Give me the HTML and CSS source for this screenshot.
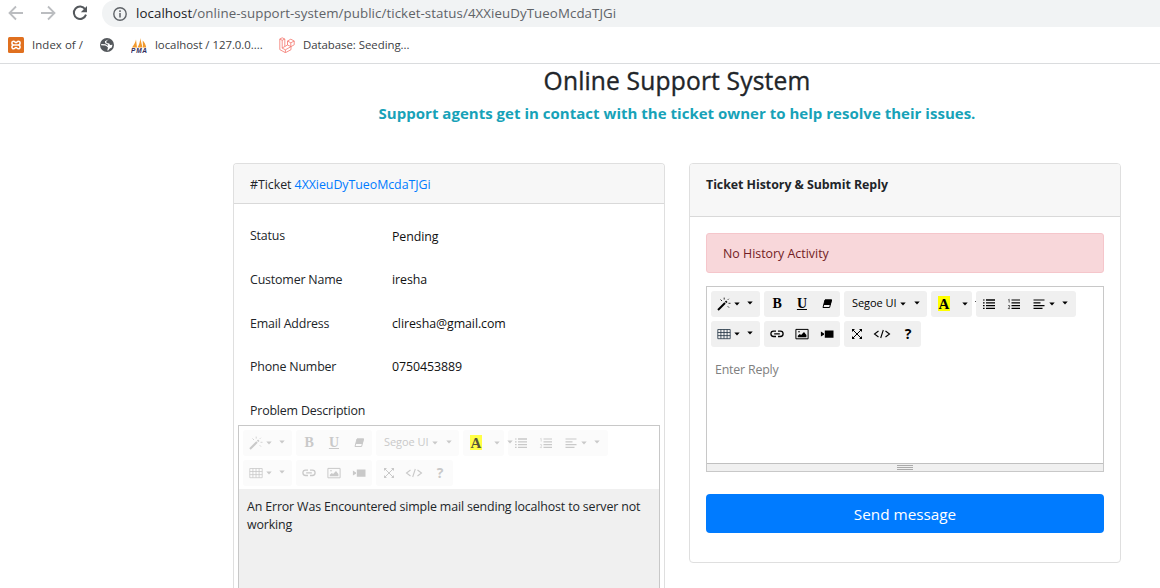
FILE: index.html
```html
<!DOCTYPE html>
<html lang="en">
<head>
<meta charset="utf-8">
<title>Online Support System</title>
<link rel="stylesheet" href="styles.css">
</head>
<body>
<svg class="defs" width="0" height="0">
  <symbol id="wand" viewBox="0 0 14 14"><path d="M1 13 8 6" stroke="currentColor" stroke-width="2"/><path d="M8.6 5.4 9.8 4.2" stroke="currentColor" stroke-width="2"/><path d="M3.5 2.5 5 4M7.2.6V2.6M11.8 1.8 10.8 2.8M11.5 6.3h2M10.8 9.3 12 10.6" stroke="currentColor" stroke-width=".8"/></symbol>
  <symbol id="eraser" viewBox="0 0 14 14"><path d="M5 3H11.5L9.6 10.5H3Z" fill="none" stroke="currentColor" stroke-width="1"/><path d="M5 2.6H12L10.6 8H3.6Z" fill="currentColor"/></symbol>
  <symbol id="ul" viewBox="0 0 14 14"><path d="M4 3h9M4 5.8h9M4 8.6h9M4 11.4h9" stroke="currentColor" stroke-width="1.3"/><path d="M1 3h1.6M1 5.8h1.6M1 8.6h1.6M1 11.4h1.6" stroke="currentColor" stroke-width="1.2"/></symbol>
  <symbol id="ol" viewBox="0 0 14 14"><path d="M4.5 3H13M4.5 5.8H13M4.5 8.6H13M4.5 11.4H13" stroke="currentColor" stroke-width="1.2"/><path d="M1.2 3 2.2 2.3V5.6M1 8.6H2.6V10L1.2 11.6H3" fill="none" stroke="currentColor" stroke-width=".6"/></symbol>
  <symbol id="align" viewBox="0 0 14 14"><path d="M1.5 3h11M1.5 5.8h7M1.5 8.6h11M1.5 11.4h9" stroke="currentColor" stroke-width="1.2"/></symbol>
  <symbol id="table" viewBox="0 0 14 14"><path d="M.8 2.5h12.4v9.2H.8ZM.8 5.5h12.4M.8 8.6h12.4M3.9 2.5v9.2M7 2.5v9.2M10.1 2.5v9.2" fill="none" stroke="currentColor" stroke-width=".8"/></symbol>
  <symbol id="link" viewBox="0 0 14 14"><path d="M6 4.1H3.6a2.7 2.7 0 0 0 0 5.4H6M8 4.1h2.4a2.7 2.7 0 0 1 0 5.4H8M4.2 6.8h5.6" fill="none" stroke="currentColor" stroke-width="1.3"/></symbol>
  <symbol id="picture" viewBox="0 0 14 14"><path d="M.9 2.4h12.2v9.4H.9Z" fill="none" stroke="currentColor" stroke-width="1"/><path d="M2.8 10.2V8.8L4.8 7l1.3 1L9 5l2.4 3v2.2Z" fill="currentColor"/><circle cx="4" cy="4.8" r=".8" fill="currentColor"/></symbol>
  <symbol id="video" viewBox="0 0 14 14"><path d="M4.8 3.5H13.5v7.2H4.8ZM.9 4.6 4 6.5V7.7L.9 9.6Z" fill="currentColor"/></symbol>
  <symbol id="full" viewBox="0 0 14 14"><path d="M3 3 11 11M11 3 3 11" stroke="currentColor" stroke-width="1"/><path d="M2 2H5L2 5ZM12 2H9L12 5ZM2 12H5L2 9ZM12 12H9L12 9Z" fill="currentColor"/></symbol>
  <symbol id="code" viewBox="0 0 18 14"><path d="M5.5 4 1.5 7 5.5 10M12.5 4 16.5 7 12.5 10M10.3 3 7.7 11" fill="none" stroke="currentColor" stroke-width="1.1"/></symbol>
  <symbol id="caret" viewBox="0 0 6 4"><path d="M.3.4H5.7L3 3.6Z" fill="currentColor"/></symbol>
</svg>

<header class="browser">
  <div class="nav">
    <svg class="nav-icon" viewBox="0 0 16 16"><path d="M15 8H2M8 1.5 1.5 8 8 14.5" fill="none" stroke="#bbbdc0" stroke-width="1.8"/></svg>
    <svg class="nav-icon" viewBox="0 0 16 16"><path d="M1 8h13M8 1.5 14.5 8 8 14.5" fill="none" stroke="#bbbdc0" stroke-width="1.8"/></svg>
    <svg class="nav-icon" viewBox="0 0 16 16"><path d="M13.2 4.2A6.2 6.2 0 1 0 14 9.6" fill="none" stroke="#54585c" stroke-width="2"/><path d="M15 1v6.2H8.8Z" fill="#54585c"/></svg>
    <div class="address">
      <svg class="info" viewBox="0 0 14 14"><circle cx="7" cy="7" r="6.2" fill="none" stroke="#5f6368" stroke-width="1.4"/><path d="M7 6v4.4M7 3.3v1.6" stroke="#5f6368" stroke-width="1.5"/></svg>
      <span class="url"><b>localhost</b>/online-support-system/public/ticket-status/4XXieuDyTueoMcdaTJGi</span>
    </div>
  </div>
  <div class="bookmarks">
    <svg class="bm-icon" viewBox="0 0 16 16"><rect width="16" height="16" rx="1.5" fill="#e0701f"/><path d="M6 8H10M6 8C3.300 8 3.300 4.200 5.600 4.200 7 4.200 7 5.600 8 5.600S9 4.200 10.400 4.200C12.700 4.200 12.700 8 10 8 12.700 8 12.700 11.800 10.400 11.800 9 11.800 9 10.400 8 10.400S7 11.800 5.600 11.800C3.300 11.800 3.300 8 6 8Z" fill="none" stroke="#fff" stroke-width="1.5"/></svg>
    <span class="bm bm-index">Index of /</span>
    <svg class="bm-icon globe" viewBox="0 0 16 16"><circle cx="8" cy="8" r="7" fill="#54585c"/><path d="M9.800 2.300 7.400 4.300 7.600 5.900 10.300 6.400 11 8 13.500 7.700 12.800 10.500 10.800 11.500 9.200 13.600 8.300 13.400 9 10.600 7.600 9.300 6.200 8.400 2 8.200 2.300 7 6.400 7.300 8.600 8.700 9 8.200 8.600 7.200 6.200 6.200 5.900 4.300Z" fill="#fff"/></svg>
    <svg class="bm-icon" viewBox="0 0 16 16"><path d="M1 10.500C3 8 4.500 5 5 2.500l1 8ZM6.500 10.500C8.500 7 9.200 4 9.200 1l2.300 9.500ZM12 10.500l-.3-7C13.500 5.500 15 8 15.200 10.500Z" fill="#f29a2e"/><text class="pma" x="0" y="15.8" textLength="16">PMA</text></svg>
    <span class="bm bm-local">localhost / 127.0.0....</span>
    <svg class="bm-icon" viewBox="0 0 16 16"><path d="M.8 2 3.200.8 5.800 2v7.500L8.500 8V4L11.800 2.200 15.200 4v3.800L12 9.600v3.100l-5.600 3L.8 12.600ZM.8 2 3.200 3.300 5.800 2M3.200 3.300v7.800l3.200 1.700L12 9.600 8.500 8M8.500 4 11.800 5.800 15.200 4M11.800 5.800v3.800M6.400 12.800v2.900M3.200 11l2.600-1.500" fill="none" stroke="#f4766d" stroke-width=".8"/></svg>
    <span class="bm bm-seed">Database: Seeding...</span>
  </div>
</header>

<main class="page">
  <h1 class="title">Online Support System</h1>
  <p class="lead">Support agents get in contact with the ticket owner to help resolve their issues.</p>
  <div class="columns">
    <section class="card ticket">
      <div class="card-head">#Ticket <a class="ticket-id">4XXieuDyTueoMcdaTJGi</a></div>
      <dl class="fields">
        <dt>Status</dt><dd class="drop">Pending</dd>
        <dt>Customer Name</dt><dd>iresha</dd>
        <dt>Email Address</dt><dd>cliresha@gmail.com</dd>
        <dt>Phone Number</dt><dd>0750453889</dd>
        <dt>Problem Description</dt>
      </dl>
      <div class="editor disabled">
        <div class="toolbar">
          <div class="group"><i class="cell"><svg class="ic"><use href="#wand"/></svg></i><svg class="caret"><use href="#caret"/></svg><svg class="caret far"><use href="#caret"/></svg></div>
          <div class="group three"><i class="cell serif">B</i><i class="cell serif under">U</i><i class="cell"><svg class="ic"><use href="#eraser"/></svg></i></div>
          <div class="group family"><span class="family-name">Segoe UI</span><svg class="caret"><use href="#caret"/></svg><svg class="caret far"><use href="#caret"/></svg></div>
          <div class="group color"><i class="mark">A</i><svg class="caret"><use href="#caret"/></svg><svg class="caret spill"><use href="#caret"/></svg></div>
          <div class="group para"><i class="cell"><svg class="ic"><use href="#ul"/></svg></i><i class="cell"><svg class="ic"><use href="#ol"/></svg></i><i class="cell"><svg class="ic"><use href="#align"/></svg></i><svg class="caret"><use href="#caret"/></svg><svg class="caret far"><use href="#caret"/></svg></div>
          <div class="group"><i class="cell"><svg class="ic"><use href="#table"/></svg></i><svg class="caret"><use href="#caret"/></svg><svg class="caret far"><use href="#caret"/></svg></div>
          <div class="group three"><i class="cell"><svg class="ic"><use href="#link"/></svg></i><i class="cell"><svg class="ic"><use href="#picture"/></svg></i><i class="cell"><svg class="ic"><use href="#video"/></svg></i></div>
          <div class="group view"><i class="cell"><svg class="ic"><use href="#full"/></svg></i><i class="cell"><svg class="ic wide"><use href="#code"/></svg></i><i class="cell help">?</i></div>
        </div>
        <div class="content">An Error Was Encountered simple mail sending localhost to server not<br>working</div>
      </div>
    </section>

    <section class="card reply">
      <div class="card-head"><strong>Ticket History &amp; Submit Reply</strong></div>
      <div class="reply-body">
        <div class="alert">No History Activity</div>
        <div class="editor">
          <div class="toolbar">
            <div class="group"><i class="cell"><svg class="ic"><use href="#wand"/></svg></i><svg class="caret"><use href="#caret"/></svg><svg class="caret far"><use href="#caret"/></svg></div>
            <div class="group three"><i class="cell serif">B</i><i class="cell serif under">U</i><i class="cell"><svg class="ic"><use href="#eraser"/></svg></i></div>
            <div class="group family"><span class="family-name">Segoe UI</span><svg class="caret"><use href="#caret"/></svg><svg class="caret far"><use href="#caret"/></svg></div>
            <div class="group color"><i class="mark">A</i><svg class="caret"><use href="#caret"/></svg><i class="speck"></i></div>
            <div class="group para"><i class="cell"><svg class="ic"><use href="#ul"/></svg></i><i class="cell"><svg class="ic"><use href="#ol"/></svg></i><i class="cell"><svg class="ic"><use href="#align"/></svg></i><svg class="caret"><use href="#caret"/></svg><svg class="caret far"><use href="#caret"/></svg></div>
            <div class="group"><i class="cell"><svg class="ic table-ic"><use href="#table"/></svg></i><svg class="caret"><use href="#caret"/></svg><svg class="caret far"><use href="#caret"/></svg></div>
            <div class="group three"><i class="cell"><svg class="ic"><use href="#link"/></svg></i><i class="cell"><svg class="ic"><use href="#picture"/></svg></i><i class="cell"><svg class="ic"><use href="#video"/></svg></i></div>
            <div class="group view"><i class="cell"><svg class="ic"><use href="#full"/></svg></i><i class="cell"><svg class="ic wide"><use href="#code"/></svg></i><i class="cell help">?</i></div>
          </div>
          <div class="placeholder">Enter Reply</div>
          <div class="grip"><i></i><i></i><i></i></div>
        </div>
        <button class="send">Send message</button>
      </div>
    </section>
  </div>
</main>
</body>
</html>
```
FILE: styles.css
```css
* { box-sizing: border-box; }
body { margin: 0; height: 588px; overflow: hidden; background: #fff; color: #212529; font: 12.4px/20px "Open Sans", "Noto Sans", sans-serif; letter-spacing: -.05px; }
svg { display: block; flex: none; }
i { font-style: normal; }
.defs { position: absolute; }

.browser { height: 64px; border-bottom: 1px solid #dadcde; }
.nav { display: flex; align-items: flex-start; height: 27px; padding-left: 8px; }
.nav-icon { width: 16px; height: 16px; margin: 5px 16px 0 0; }
.nav-icon:nth-child(3) { margin-right: 14px; }
.address { flex: 1; display: flex; align-items: center; height: 27px; padding-left: 11px; background: #f1f3f4; border-radius: 13px 0 0 14px; }
.info { width: 14px; height: 14px; margin-right: 9px; }
.url { margin-top: -1px; font-size: 13.3px; letter-spacing: .07px; color: #5f6368; white-space: nowrap; }
.url b { font-weight: 400; color: #202124; }
.bookmarks { display: flex; align-items: center; height: 36px; padding-left: 8px; }
.bm-icon { width: 16px; height: 16px; }
.bm { margin-left: 8px; font-size: 11.4px; letter-spacing: -.03px; color: #3c4043; white-space: nowrap; }
.bm-index { width: 67px; letter-spacing: .08px; }
.globe { margin-right: 16px; }
.bm-local { width: 124px; }
.pma { font: italic bold 6.5px "Liberation Sans", sans-serif; fill: #2d2a5c; }

.page { padding-left: 233px; }
.title { width: 888px; margin: 0; height: 35px; text-align: center; font-size: 24.6px; line-height: 34px; font-weight: 500; letter-spacing: .16px; -webkit-text-stroke: .35px #212529; white-space: nowrap; }
.lead { width: 888px; margin: 0; height: 64px; padding-top: 3px; text-align: center; font-size: 15px; line-height: 22px; font-weight: 700; letter-spacing: .02px; color: #17a2b8; white-space: nowrap; }
.columns { display: flex; align-items: flex-start; gap: 24px; }
.card { width: 432px; border: 1px solid #dfdfdf; border-radius: 4px; }
.card-head { height: 40px; padding: 11px 16px 0; background: #f7f7f7; border-bottom: 1px solid #d9d9d9; border-radius: 3px 3px 0 0; }
.ticket { height: 425px; border-bottom: 0; border-radius: 4px 4px 0 0; }
.ticket-id { color: #007bff; }
.fields { display: grid; grid-template-columns: 142px 1fr; grid-auto-rows: 43.75px; margin: 0; padding: 22px 16px 0; height: 221px; letter-spacing: -.17px; }
.fields dt, .fields dd { margin: 0; height: 20px; }
.fields dd { color: #111; letter-spacing: -.08px; }
.fields .drop { padding-top: 1px; }

.editor { border: 1px solid #c8c8c8; }
.toolbar { display: flex; flex-wrap: wrap; align-content: flex-start; gap: 4px; height: 63px; padding: 4px 4px 0; }
.group { position: relative; display: flex; align-items: center; width: 49px; height: 26px; background: #f0f0f0; border-radius: 3px; color: #000; }
.cell { display: flex; justify-content: center; align-items: center; width: 25.3px; height: 26px; }
.cell:first-child { padding-left: 1px; }
.ic { width: 14px; height: 14px; }
.ic.wide { width: 18px; }
.table-ic { color: #234; }
.caret { width: 6px; height: 4px; margin: -1px 0 0 -2px; }
.caret.far { margin: -2px 0 0 7px; }
.group.three { width: 76px; }
.group.view { width: 77px; }
.view .cell { width: 25.6px; }
.group.family { width: 83px; padding-left: 8px; }
.family-name { width: 46px; margin-top: -2px; font-size: 11px; letter-spacing: -.05px; white-space: nowrap; }
.family .caret { margin-left: 2px; }
.family .caret.far { margin-left: 8px; }
.group.color { width: 41px; padding-left: 7px; }
.mark { width: 12px; height: 15px; margin-top: -1px; font: bold 15px/16px "Liberation Serif", serif; background: #ff0; text-align: center; }
.color .caret { margin-left: 12px; }
.color .caret.spill { position: absolute; z-index: 1; right: -9px; top: 10px; margin: 0; }
.speck { position: absolute; right: -4px; top: 10px; width: 1px; height: 1px; background: #555; }
.group.para { width: 100px; }
.para .cell + .caret { margin-left: -3px; }
.serif { font: bold 14px/26px "Liberation Serif", serif; }
.under { text-decoration: underline; }
.help { font-weight: 700; font-size: 14px; }

.disabled { width: 422px; height: 163px; margin-left: 4px; border-bottom: 0; }
.disabled .group { background: #fbfbfb; color: #c9c9c9; }
.disabled .mark { color: #55553a; background: #ffff45; }
.content { height: 99px; padding: 9px 8px 0; line-height: 18px; background: #f0f0f0; letter-spacing: -.145px; white-space: nowrap; }

.reply { height: 400px; }
.reply .card-head { height: 53px; }
.reply-body { padding: 16px; }
.alert { height: 40px; padding: 10px 16px 0; color: #721c24; background: #f8d7da; border: 1px solid #f5c6cb; border-radius: 3px; letter-spacing: 0; }
.reply .editor { height: 186px; margin-top: 13px; }
.placeholder { height: 113px; padding: 10px 8px 0; color: #808080; letter-spacing: -.2px; }
.grip { display: flex; flex-direction: column; align-items: center; gap: 1px; height: 8px; padding-top: 1px; background: #f0f0f0; border-top: 1px solid #c0c0c0; }
.grip i { width: 16px; height: 1px; background: #aaa; }
.send { display: block; width: 100%; height: 39px; margin-top: 22px; padding: 2px 0 0; border: 0; border-radius: 4px; background: #007bff; color: #fff; font: 15.3px/37px "Open Sans", "Noto Sans", sans-serif; }
```
